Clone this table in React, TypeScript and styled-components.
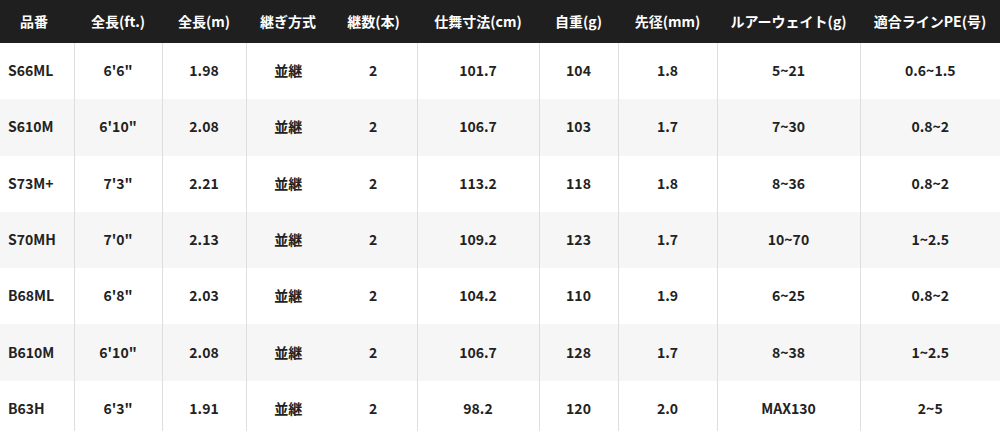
import React from "react";
import styled, { createGlobalStyle } from "styled-components";

const GlobalStyle = createGlobalStyle`
  html, body {
    margin: 0;
    padding: 0;
    background: #fff;
  }
  body {
    font-family: "Noto Sans CJK JP", "Noto Sans", sans-serif;
    color: #222;
  }
`;

const Table = styled.table`
  width: 1000px;
  border-collapse: collapse;
  table-layout: fixed;
`;

const HeadRow = styled.tr`
  background: #1f1f1f;
  height: 43px;
`;

const HeadCell = styled.th<{ $first?: boolean }>`
  color: #fff;
  font-size: 14px;
  font-weight: 700;
  text-align: center;
  padding: 0 ${(p) => (p.$first ? "6px" : "0")} 2px 0;
  white-space: nowrap;
`;

const Row = styled.tr<{ $shade: boolean }>`
  background: ${(p) => (p.$shade ? "#f6f6f6" : "#fff")};
  height: 56.3px;
`;

const Cell = styled.td<{ $first?: boolean; $line?: boolean }>`
  font-size: 14px;
  font-weight: 700;
  color: #222;
  text-align: ${(p) => (p.$first ? "left" : "center")};
  padding: 0 0 2px ${(p) => (p.$first ? "8px" : "0")};
  border-right: ${(p) => (p.$line ? "1px solid #dedede" : "none")};
  white-space: nowrap;
`;

// 列幅
const widths = [74, 88, 84, 84, 87, 122, 79, 99, 143, 140];
// 縦線を引く列
const lines = [true, true, true, false, true, true, true, true, true, false];

const headers = [
  "品番",
  "全長(ft.)",
  "全長(m)",
  "継ぎ方式",
  "継数(本)",
  "仕舞寸法(cm)",
  "自重(g)",
  "先径(mm)",
  "ルアーウェイト(g)",
  "適合ラインPE(号)",
];

const rows = [
  ["S66ML", "6'6\"", "1.98", "並継", "2", "101.7", "104", "1.8", "5~21", "0.6~1.5"],
  ["S610M", "6'10\"", "2.08", "並継", "2", "106.7", "103", "1.7", "7~30", "0.8~2"],
  ["S73M+", "7'3\"", "2.21", "並継", "2", "113.2", "118", "1.8", "8~36", "0.8~2"],
  ["S70MH", "7'0\"", "2.13", "並継", "2", "109.2", "123", "1.7", "10~70", "1~2.5"],
  ["B68ML", "6'8\"", "2.03", "並継", "2", "104.2", "110", "1.9", "6~25", "0.8~2"],
  ["B610M", "6'10\"", "2.08", "並継", "2", "106.7", "128", "1.7", "8~38", "1~2.5"],
  ["B63H", "6'3\"", "1.91", "並継", "2", "98.2", "120", "2.0", "MAX130", "2~5"],
];

const App = () => {
  return (
    <>
      <GlobalStyle />
      <Table>
        <colgroup>
          {widths.map((w, i) => (
            <col key={i} style={{ width: w }} />
          ))}
        </colgroup>
        <thead>
          <HeadRow>
            {headers.map((h, i) => (
              <HeadCell key={h} $first={i === 0}>
                {h}
              </HeadCell>
            ))}
          </HeadRow>
        </thead>
        <tbody>
          {rows.map((r, i) => (
            <Row key={r[0]} $shade={i % 2 === 1}>
              {r.map((v, j) => (
                <Cell key={j} $first={j === 0} $line={lines[j]}>
                  {v}
                </Cell>
              ))}
            </Row>
          ))}
        </tbody>
      </Table>
    </>
  );
};

export default App;
